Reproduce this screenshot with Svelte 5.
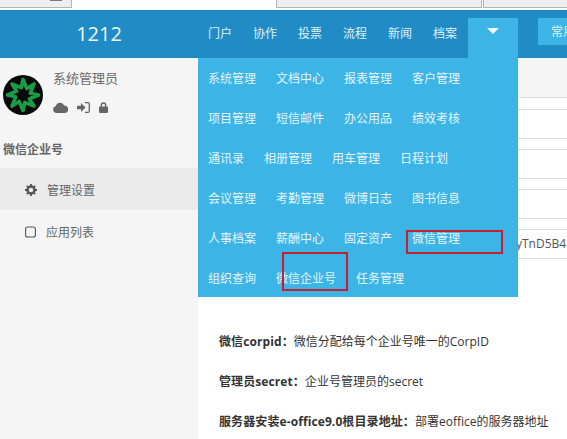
<script>
	const navItems = ['门户', '协作', '投票', '流程', '新闻', '档案'];
	const menuItems = [
		'系统管理', '文档中心', '报表管理', '客户管理',
		'项目管理', '短信邮件', '办公用品', '绩效考核',
		'通讯录', '相册管理', '用车管理', '日程计划',
		'会议管理', '考勤管理', '微博日志', '图书信息',
		'人事档案', '薪酬中心', '固定资产', '微信管理',
		'组织查询', '微信企业号', '任务管理'
	];
	const rows = ['', '', '', 'yTnD5B4'];
	const notes = [
		{ label: '微信corpid', text: '微信分配给每个企业号唯一的CorpID' },
		{ label: '管理员secret', text: '企业号管理员的secret' },
		{ label: '服务器安装e-office9.0根目录地址', text: '部署eoffice的服务器地址' }
	];

	// zigzag star of the avatar, the inner points are turned a bit so it reads as a pinwheel
	const starPoints = Array.from({ length: 16 }, (_, i) => {
		const inner = i % 2 === 1;
		const angle = ((i * 22.5 + (inner ? 9 : 0)) * Math.PI) / 180;
		const r = inner ? 7.5 : 15.5;
		return `${(20 + r * Math.cos(angle)).toFixed(1)},${(20 + r * Math.sin(angle)).toFixed(1)}`;
	}).join(' ');
</script>

<div class="page">
	<div class="browser-strip">
		<div class="tab first"><span class="tab-mark"></span></div>
		<div class="tab second"></div>
		<div class="tab third"></div>
	</div>

	<header class="header">
		<div class="brand">1212</div>
		<nav class="nav">
			{#each navItems as item}
				<span class="nav-item">{item}</span>
			{/each}
			<span class="nav-more"><span class="caret"></span></span>
		</nav>
		<span class="common">常用</span>
	</header>

	<div class="body">
		<aside class="sidebar">
			<div class="user">
				<svg class="avatar" width="40" height="40" viewBox="0 0 40 40">
					<circle cx="20" cy="20" r="20" fill="#0a0a0a" />
					<polygon points={starPoints} fill="none" stroke="#1c9a48" stroke-width="3.600" stroke-linejoin="round" />
				</svg>
				<div class="user-info">
					<div class="user-name">系统管理员</div>
					<div class="user-icons">
						<svg width="15" height="11" viewBox="0 0 15 11">
							<path d="M3.500 11A3.500 3.500 0 0 1 2.800 4.100 4.500 4.500 0 0 1 11.200 3.400 3.800 3.800 0 0 1 11.500 11z" fill="#666" />
						</svg>
						<svg width="13" height="11" viewBox="0 0 13 11">
							<path d="M0 3.800h4V1l4.500 4.500L4 10V7.200H0z" fill="#666" />
							<path d="M8 .7h3a1.300 1.300 0 0 1 1.300 1.300v7a1.300 1.300 0 0 1-1.300 1.300H8" fill="none" stroke="#666" stroke-width="1.300" />
						</svg>
						<svg width="9" height="11" viewBox="0 0 9 11">
							<path d="M2.300 5V3.200a2.200 2.200 0 0 1 4.400 0V5" fill="none" stroke="#666" stroke-width="1.400" />
							<rect x="0" y="4.600" width="9" height="6.400" rx="1" fill="#666" />
						</svg>
					</div>
				</div>
			</div>
			<div class="section-title">微信企业号</div>
			<div class="side-item active">
				<svg width="12" height="12" viewBox="0 0 12 12">
					<circle cx="6" cy="6" r="3.500" fill="none" stroke="#555" stroke-width="2.400" />
					<path d="M6 0v12M0 6h12M1.800 1.800l8.400 8.400M10.200 1.800l-8.400 8.400" stroke="#555" stroke-width="1.800" stroke-dasharray="2 8 2 0" />
				</svg>
				<span>管理设置</span>
			</div>
			<div class="side-item">
				<svg width="11" height="12" viewBox="0 0 11 12">
					<rect x="0.600" y="1" width="9.800" height="10" rx="2" fill="none" stroke="#555" stroke-width="1.100" />
				</svg>
				<span>应用列表</span>
			</div>
		</aside>

		<main class="main">
			<div class="panel-head"></div>
			<div class="rows">
				{#each rows as value}
					<div class="row">
						<div class="row-gap"></div>
						<div class="row-cell">{value}</div>
					</div>
				{/each}
			</div>
			<div class="notes">
				{#each notes as note}
					<p><strong>{note.label}：</strong>{note.text}</p>
				{/each}
			</div>
		</main>

		<div class="menu">
			{#each menuItems as item}
				<span class="menu-item">{item}</span>
			{/each}
		</div>

		<div class="mark mark-manage"></div>
		<div class="mark mark-corp"></div>
	</div>
</div>

<style>
	:global(body) {
		margin: 0;
		background: #fff;
		overflow: hidden;
	}

	.page {
		width: 567px;
		height: 439px;
		overflow: hidden;
		font-family: "Open Sans", "Noto Sans CJK SC", sans-serif;
		font-size: 12px;
		color: #333;
	}

	.browser-strip {
		display: flex;
		height: 10px;
		background: #fff;
	}

	.tab {
		height: 7px;
		background: #eeeeee;
		border: 1px solid #b4b4b8;
		border-top: none;
	}

	.tab.first {
		width: 71px;
		border-left: none;
		position: relative;
	}

	.tab-mark {
		position: absolute;
		left: 50px;
		top: 0;
		width: 12px;
		height: 1px;
		background: #777;
	}

	.tab.second {
		width: 204px;
		margin-left: 204px;
	}

	.tab.third {
		flex: 1;
		margin-left: 1px;
		border-right: none;
	}

	.header {
		display: flex;
		height: 48px;
		background: #218bc5;
		color: #dff2fb;
	}

	.brand {
		width: 198px;
		flex-shrink: 0;
		text-align: center;
		font-size: 20px;
		line-height: 48px;
		color: #f0f8fc;
	}

	.nav {
		display: flex;
		flex-shrink: 0;
		padding-left: 10px;
	}

	.nav-item {
		width: 45px;
		line-height: 47px;
	}

	.nav-more {
		display: flex;
		align-items: center;
		justify-content: center;
		width: 50px;
		height: 40px;
		margin-top: 8px;
		margin-left: -10px;
		background: #3cb4e6;
		box-sizing: border-box;
		padding-bottom: 14px;
	}

	.caret {
		border-left: 6.500px solid transparent;
		border-right: 6.500px solid transparent;
		border-top: 6px solid #f2fafd;
	}

	.common {
		height: 27px;
		width: 60px;
		margin-top: 8px;
		margin-left: 20px;
		padding-left: 13px;
		background: #3cb4e6;
		line-height: 27px;
		flex-shrink: 0;
	}

	.body {
		display: flex;
		position: relative;
		height: 381px;
	}

	.sidebar {
		width: 198px;
		flex-shrink: 0;
		background: #f5f5f5;
		color: #666;
	}

	.user {
		display: flex;
		gap: 10px;
		padding: 17px 0 0 3px;
		height: 60px;
	}

	.user-name {
		font-size: 13px;
		line-height: 18px;
		margin-top: -6px;
		color: #6b6b6b;
	}

	.user-icons {
		display: flex;
		align-items: center;
		gap: 9px;
		margin-top: 15px;
	}

	.section-title {
		margin: 1px 0 0 3px;
		line-height: 28px;
		font-weight: 700;
		color: #666;
	}

	.side-item {
		display: flex;
		align-items: center;
		gap: 10px;
		height: 42px;
		padding: 1px 0 0 25px;
		box-sizing: border-box;
	}

	.side-item.active {
		background: #ebebeb;
		margin-top: 4px;
	}

	.main {
		flex: 1;
		min-width: 0;
		overflow: hidden;
	}

	.panel-head {
		height: 39px;
		background: #f5f5f5;
	}

	.rows {
		border-bottom: 1px solid #dcdcdc;
	}

	.row {
		border-top: 1px solid #dcdcdc;
	}

	.row-gap {
		height: 10px;
	}

	.row:first-child .row-gap {
		height: 11px;
	}

	.row-cell {
		height: 28px;
		border-top: 1px solid #dcdcdc;
		padding-left: 318px;
		line-height: 28px;
		white-space: nowrap;
		color: #555;
	}

	.notes {
		padding: 73px 0 0 21px;
	}

	.notes p {
		margin: 0 0 20px;
		line-height: 20px;
		white-space: nowrap;
	}

	.notes strong {
		font-weight: 700;
		letter-spacing: 0.1px;
	}

	.menu {
		position: absolute;
		left: 198px;
		top: 0;
		width: 320px;
		height: 239px;
		display: flex;
		flex-wrap: wrap;
		align-content: flex-start;
		background: #3cb4e6;
	}

	.menu-item {
		padding: 0 10px;
		height: 40px;
		line-height: 42px;
		color: #e4f5fc;
	}

	.mark {
		position: absolute;
		border: 2px solid #c5202f;
		box-sizing: border-box;
	}

	.mark-manage {
		left: 406px;
		top: 172px;
		width: 97px;
		height: 24px;
	}

	.mark-corp {
		left: 282px;
		top: 194px;
		width: 66px;
		height: 39px;
	}
</style>
